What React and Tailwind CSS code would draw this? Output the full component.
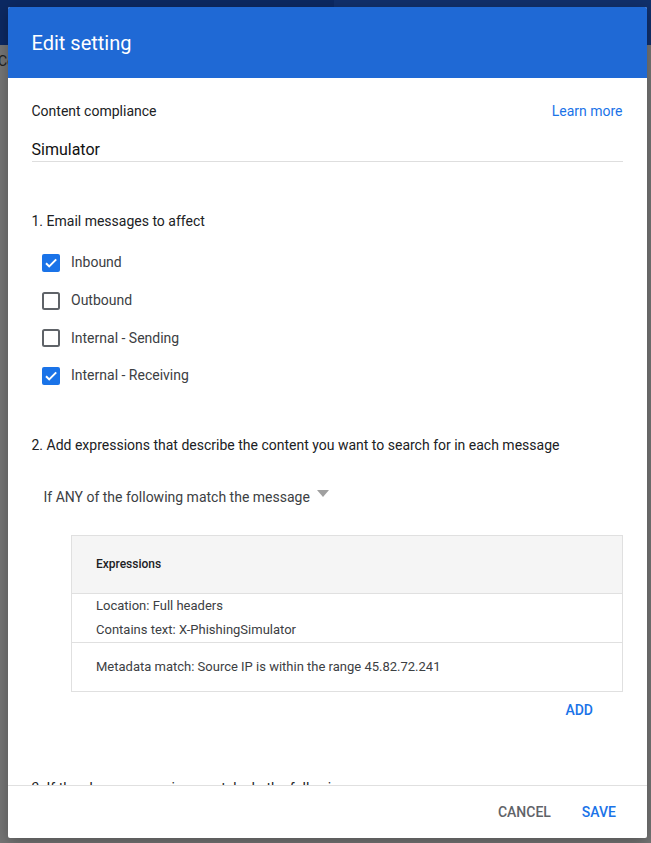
import React from 'react'

const Checkbox = ({ checked }) => (
  <svg width="18" height="18" viewBox="0 0 18 18" className="shrink-0">
    {checked ? (
      <>
        <rect x="0" y="0" width="18" height="18" rx="2" fill="#1a73e8" />
        <path d="M4 9.2l3.2 3.2L14.2 5.4" fill="none" stroke="#fff" strokeWidth="2" />
      </>
    ) : (
      <rect x="1" y="1" width="16" height="16" rx="1.5" fill="#fff" stroke="#5f6368" strokeWidth="2" />
    )}
  </svg>
)

const options = [
  { label: 'Inbound', checked: true },
  { label: 'Outbound', checked: false },
  { label: 'Internal - Sending', checked: false },
  { label: 'Internal - Receiving', checked: true },
]

const App = () => {
  return (
    <div
      className="relative h-[843px] w-[651px] overflow-hidden bg-[#767676]"
      style={{ fontFamily: 'Roboto, "Liberation Sans", sans-serif' }}
    >
      {/* dimmed page behind the dialog */}
      <div className="flex h-[45px]">
        <div className="w-[334px] bg-[#0c2963]" />
        <div className="flex-1 bg-[#11306c]" />
      </div>
      <div className="pt-[6px] text-[14px] text-[#222] leading-5 -ml-[2px]">Co</div>

      {/* dialog */}
      <div className="absolute left-[7.5px] top-[7px] flex h-[831px] w-[639px] flex-col overflow-hidden rounded-[2px] bg-white shadow-[0_4px_16px_rgba(0,0,0,0.3)]">
        <div className="flex h-[71px] shrink-0 items-center bg-[#1f69d5] px-6">
          <h1 className="text-[20px] text-white">Edit setting</h1>
        </div>

        <div className="h-[707px] shrink-0 overflow-hidden px-6 pt-[23px] text-[#202124]">
          <div className="flex items-center justify-between text-[14px] leading-5">
            <span>Content compliance</span>
            <span className="text-[#1a73e8]">Learn more</span>
          </div>
          <div className="mt-[18px] border-b border-[#dedede] text-[16px] leading-[22px] text-[#111]">
            Simulator
          </div>

          <div className="mt-[49px] text-[14px] leading-5">1. Email messages to affect</div>
          <div className="mt-[13px]">
            {options.map((o) => (
              <div key={o.label} className="flex h-[37.7px] items-center pl-[10.5px] text-[14px] text-[#3c4043]">
                <Checkbox checked={o.checked} />
                <span className="ml-[11px]">{o.label}</span>
              </div>
            ))}
          </div>

          <div className="mt-[40px] text-[14px] leading-5">
            2. Add expressions that describe the content you want to search for in each message
          </div>

          <div className="mt-[32px] flex items-center pl-[12px] text-[14px] leading-5 text-[#3c4043]">
            <span>If ANY of the following match the message</span>
            <svg width="12" height="7" viewBox="0 0 12 7" className="ml-[7px] -mt-[7px]">
              <path d="M0 0h12L6 7z" fill="#a0a0a0" />
            </svg>
          </div>

          <div className="ml-[39.5px] mt-[28px] border border-[#e0e0e0] text-[13px] text-[#3c4043]">
            <div className="flex h-[58px] items-center border-b border-[#e0e0e0] bg-[#f5f5f5] pl-6 text-[12px] font-medium text-[#202124]">
              Expressions
            </div>
            <div className="border-b border-[#e0e0e0] pl-6 leading-6">
              <div>Location: Full headers</div>
              <div>Contains text: X-PhishingSimulator</div>
            </div>
            <div className="flex h-[48px] items-center pl-6">
              Metadata match: Source IP is within the range 45.82.72.241
            </div>
          </div>

          <div className="mt-2 flex justify-end pr-[29.5px]">
            <span className="text-[14px] font-medium leading-5 text-[#1a73e8]">ADD</span>
          </div>

          <div className="mt-[58px] text-[14px] leading-5">
            3. If the above expressions match, do the following
          </div>
        </div>

        <div className="flex h-[53px] shrink-0 items-center justify-end gap-[31px] border-t border-[#e0e0e0] pr-[30.5px] text-[14px] font-medium">
          <span className="text-[#5f6368]">CANCEL</span>
          <span className="text-[#1a73e8]">SAVE</span>
        </div>
      </div>
    </div>
  )
}

export default App
